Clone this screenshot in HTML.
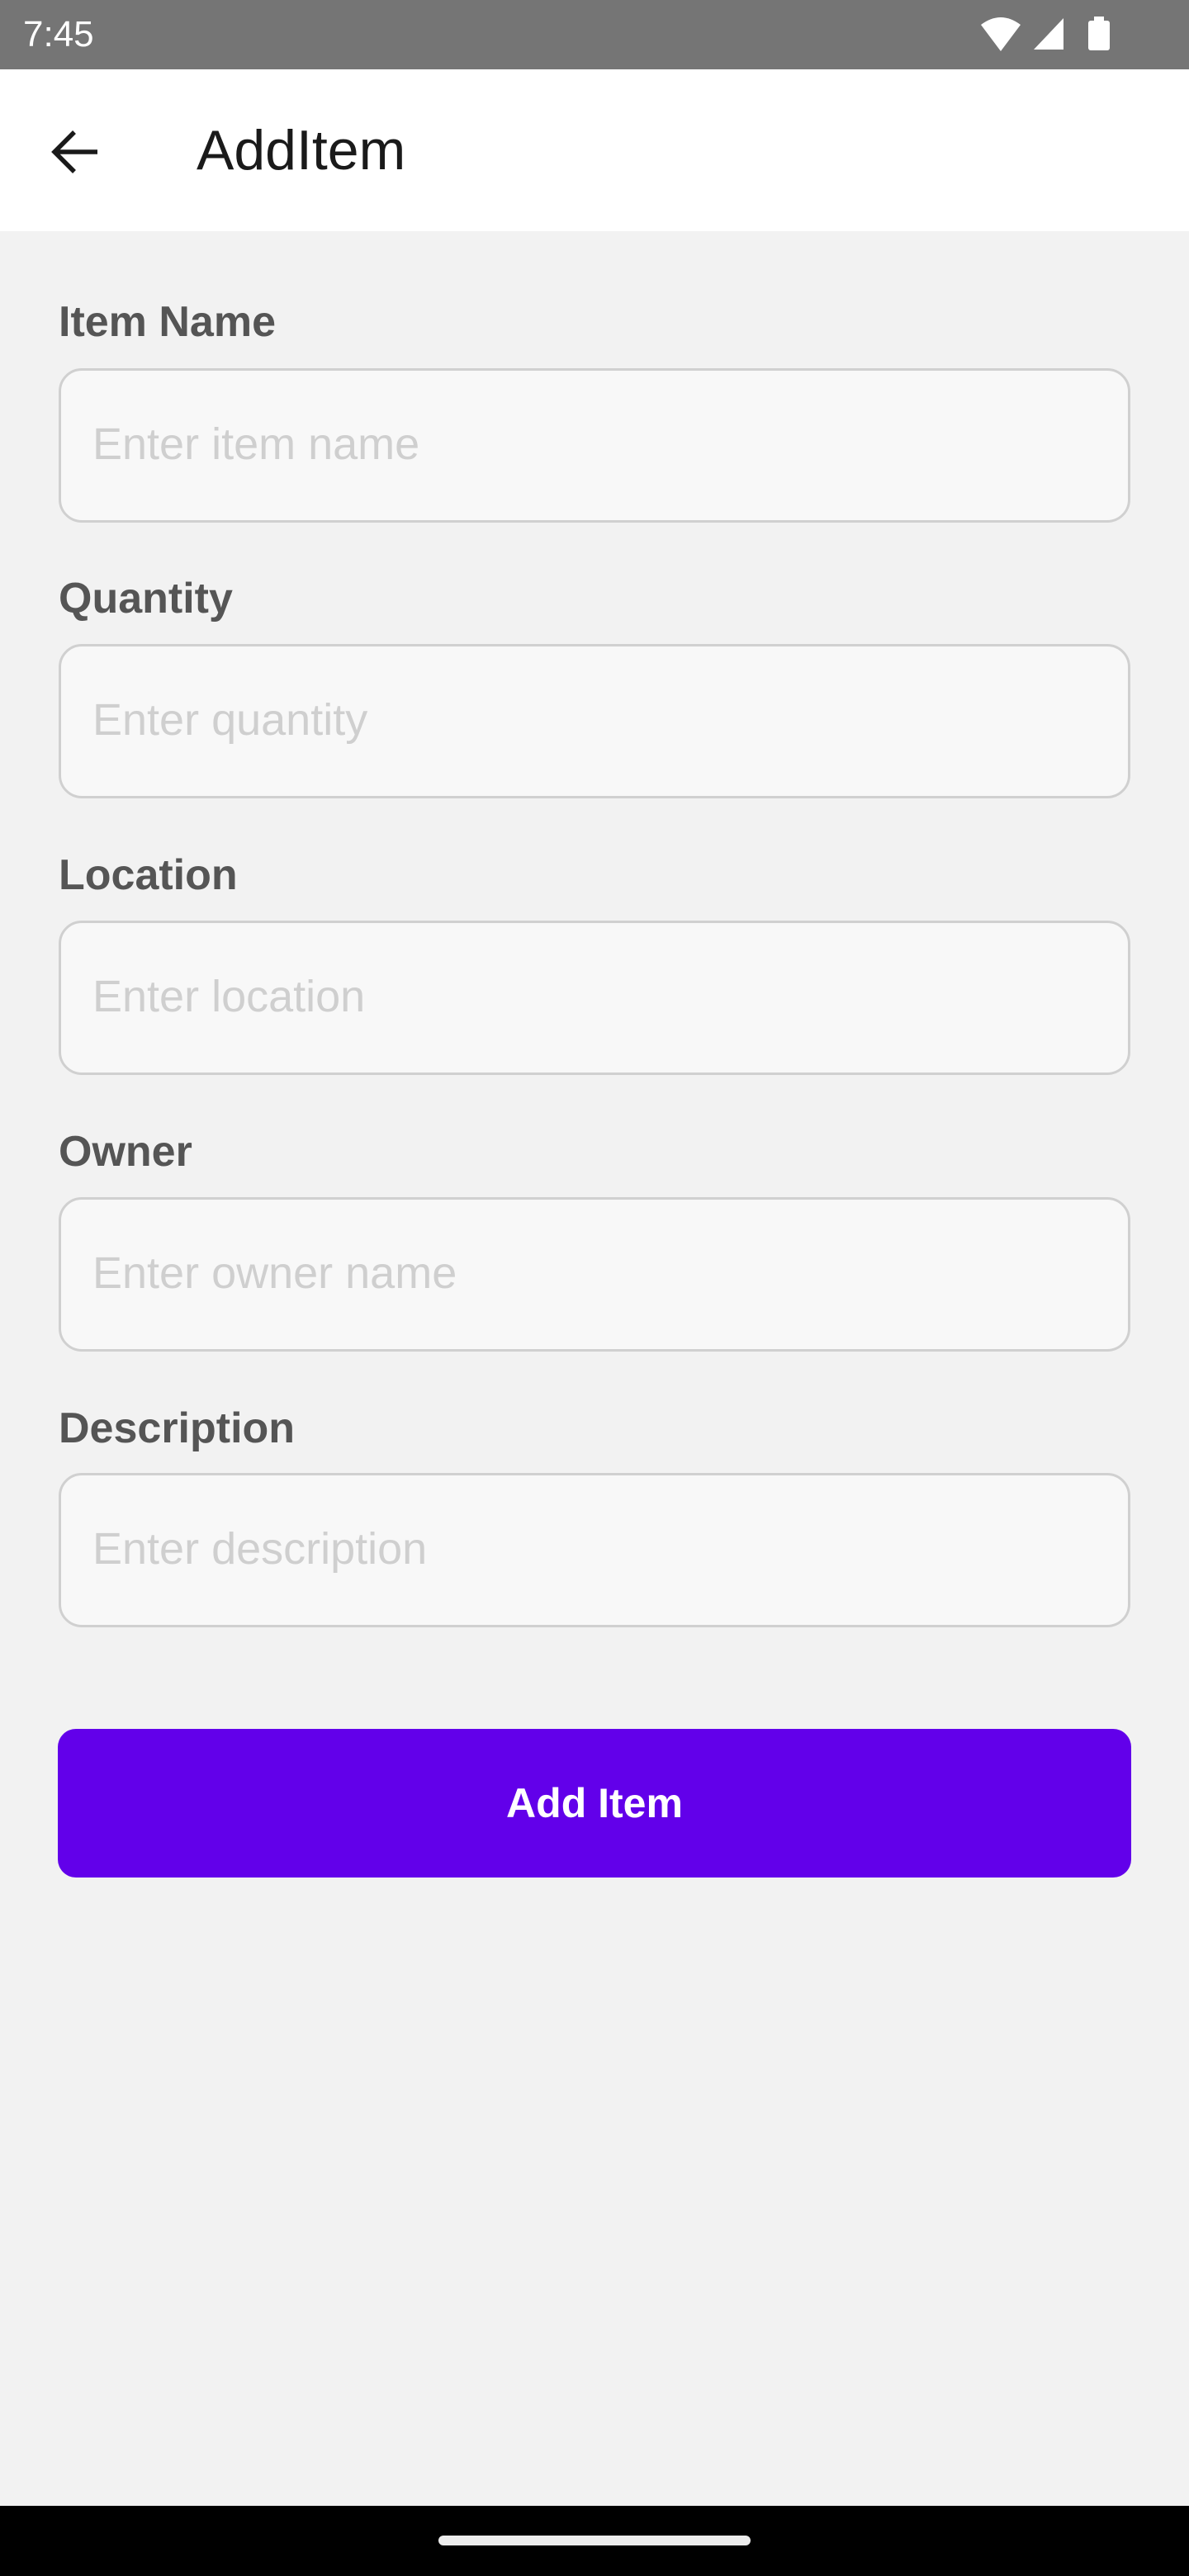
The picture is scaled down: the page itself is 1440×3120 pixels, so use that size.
<!DOCTYPE html>
<html><head><meta charset="utf-8"><style>
*{margin:0;padding:0;box-sizing:border-box}
body{width:1440px;height:3120px;background:#f2f2f2;font-family:"Liberation Sans",sans-serif;position:relative;overflow:hidden}
.status{position:absolute;top:0;left:0;width:1440px;height:84px;background:#757575}
.time{position:absolute;left:28px;top:17px;color:#fff;font-size:44px}
.appbar{position:absolute;top:84px;left:0;width:1440px;height:196px;background:#fff}
.title{position:absolute;left:238px;top:59px;font-size:68px;color:#1a1a1a}
.label{position:absolute;left:71px;font-size:52px;font-weight:bold;color:#555}
.field{position:absolute;left:71px;width:1298px;height:187px;background:#f8f8f8;border:3px solid #d0d0d0;border-radius:28px}
.ph{position:absolute;left:38px;top:58px;font-size:54px;color:#cfcfcf}
.btn{position:absolute;left:70px;top:2094px;width:1300px;height:180px;background:#6200ea;border-radius:22px;color:#fff;font-size:50px;font-weight:bold;text-align:center;line-height:180px}
.nav{position:absolute;left:0;top:3035px;width:1440px;height:85px;background:#000}
.handle{position:absolute;left:531px;top:36px;width:378px;height:12px;border-radius:6px;background:#ececec}
</style></head><body>
<div class="status"><div class="time">7:45</div>
<svg style="position:absolute;left:1186px;top:18px" width="160" height="48" viewBox="0 0 160 48">
<path d="M2 12 Q26 -6 50 12 L26 44 Z" fill="#fff"/>
<path d="M102 4 L102 42 L66 42 Z" fill="#fff"/>
<rect x="132" y="7" width="26" height="36" rx="3" fill="#fff"/><rect x="139" y="2" width="12" height="6" fill="#fff"/>
</svg></div>
<div class="appbar">
<svg style="position:absolute;left:60px;top:70px" width="60" height="60" viewBox="0 0 60 60"><path d="M58 30 H8 M30 6 L6 30 L30 54" stroke="#1a1a1a" stroke-width="5.5" fill="none"/></svg>
<div class="title">AddItem</div></div>

<div class="label" style="top:360px">Item Name</div>
<div class="field" style="top:446px"><div class="ph">Enter item name</div></div>
<div class="label" style="top:695px">Quantity</div>
<div class="field" style="top:780px"><div class="ph">Enter quantity</div></div>
<div class="label" style="top:1030px">Location</div>
<div class="field" style="top:1115px"><div class="ph">Enter location</div></div>
<div class="label" style="top:1365px">Owner</div>
<div class="field" style="top:1450px"><div class="ph">Enter owner name</div></div>
<div class="label" style="top:1700px">Description</div>
<div class="field" style="top:1784px"><div class="ph">Enter description</div></div>

<div class="btn">Add Item</div>
<div class="nav"><div class="handle"></div></div>
</body></html>
